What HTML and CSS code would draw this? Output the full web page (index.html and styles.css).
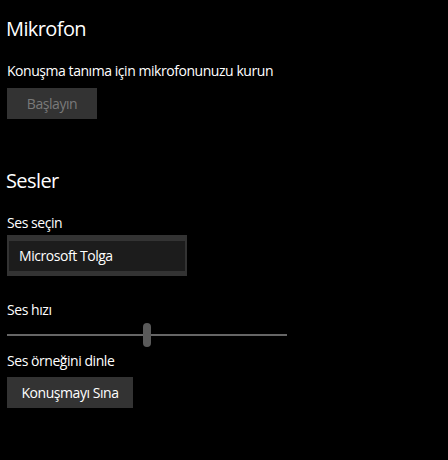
FILE: index.html
```html
<!DOCTYPE html>
<html lang="tr">
<head>
    <meta charset="UTF-8">
    <meta name="viewport" content="width=device-width, initial-scale=1.0">
    <title>Konuşma</title>
    <link rel="stylesheet" href="styles.css">
</head>
<body>

    <section class="group">
        <h2 class="title">Mikrofon</h2>
        <p class="label desc">Konuşma tanıma için mikrofonunuzu kurun</p>
        <button class="btn btn-start" disabled>Başlayın</button>
    </section>

    <section class="group voices">
        <h2 class="title">Sesler</h2>

        <p class="label label-voice">Ses seçin</p>
        <div class="combo">Microsoft Tolga</div>

        <p class="label label-rate">Ses hızı</p>
        <div class="slider">
            <div class="track"></div>
            <div class="thumb" style="left: 136px;"></div>
        </div>

        <p class="label label-sample">Ses örneğini dinle</p>
        <button class="btn btn-test">Konuşmayı Sına</button>
    </section>

</body>
</html>
```

FILE: styles.css
```css
* {
    margin: 0;
    padding: 0;
    box-sizing: border-box;
}
body {
    font-family: 'Open Sans', 'Noto Sans', sans-serif;
    background-color: #000;
    color: #fff;
    padding-left: 7px;
    letter-spacing: -0.45px;
}
.title {
    font-size: 20px;
    font-weight: normal;
    line-height: 28px;
    margin-top: 15px;
    margin-left: -1px;
    letter-spacing: -0.6px;
}
.voices .title {
    margin-top: 48px;
}
.label {
    font-size: 14px;
    line-height: 20px;
}
.desc {
    margin-top: 18px;
}
.btn {
    display: block;
    height: 31px;
    border: none;
    background-color: #333;
    color: #fff;
    font-family: inherit;
    font-size: 14px;
    letter-spacing: inherit;
}
.btn-start {
    width: 90px;
    margin-top: 7px;
    color: #7a7a7a;
}
.btn-test {
    width: 126px;
    margin-top: 6px;
}
.label-voice {
    margin-top: 18px;
}
.combo {
    width: 180px;
    height: 41px;
    margin-top: 2px;
    border-style: solid;
    border-color: #333;
    border-width: 6px 2px 5px;
    background-color: #1c1c1c;
    padding-left: 10px;
    font-size: 14px;
    line-height: 30px;
}
.label-rate {
    margin-top: 24px;
}
.slider {
    position: relative;
    width: 280px;
    height: 24px;
    margin-top: 3px;
}
.track {
    position: relative;
    top: 11px;
    height: 2px;
    background-color: #666;
}
.thumb {
    position: absolute;
    top: 0;
    width: 8px;
    height: 24px;
    border-radius: 4px;
    background-color: #5a5a5a;
}
.label-sample {
    margin-top: 4px;
}
```
